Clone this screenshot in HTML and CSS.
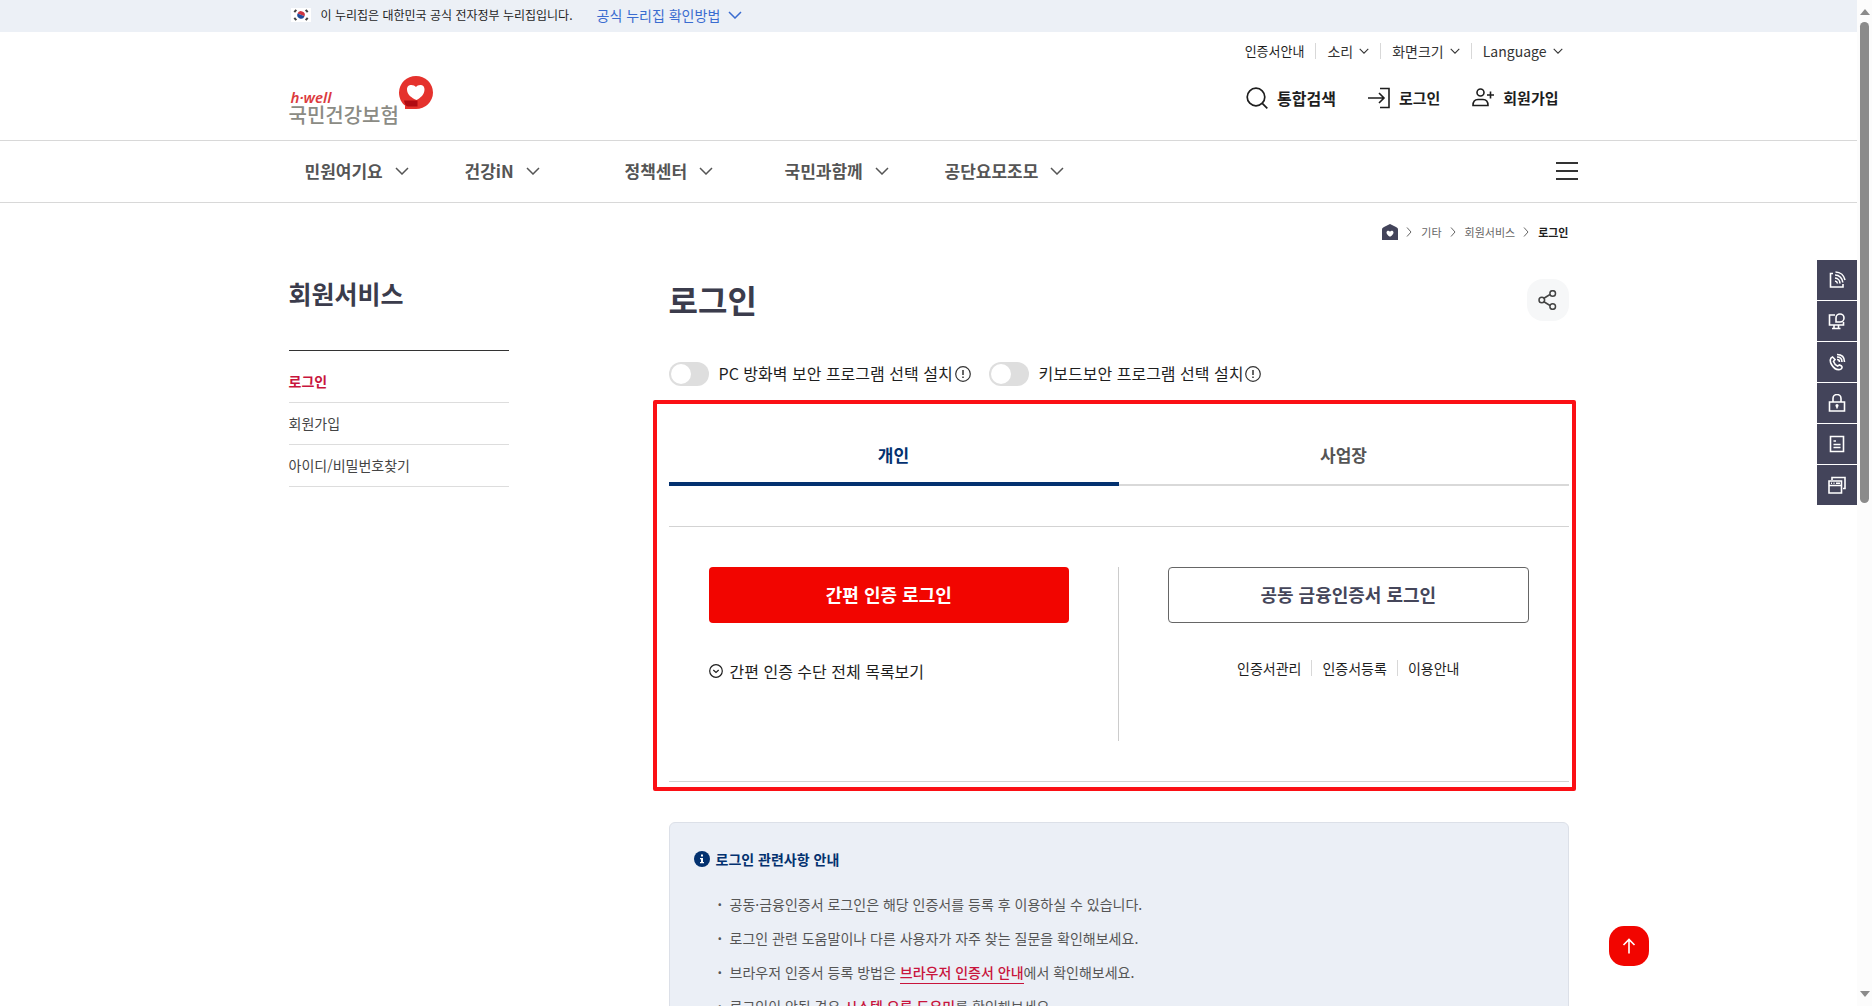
FILE: index.html
```html
<!DOCTYPE html>
<html lang="ko">
<head>
<meta charset="utf-8">
<meta name="viewport" content="width=device-width, initial-scale=1">
<title>로그인 | 국민건강보험</title>
<link rel="stylesheet" href="styles.css">
</head>
<body>
<svg class="sprite" aria-hidden="true">
  <symbol id="chevron" viewBox="0 0 14 8"><path d="M1 1l6 6 6-6" fill="none" stroke="currentColor" stroke-width="1.5"/></symbol>
  <symbol id="chevron-right" viewBox="0 0 6 10"><path d="M1 0.5l4 4.500-4 4.500" fill="none" stroke="currentColor"/></symbol>
  <symbol id="alert" viewBox="0 0 16 16"><circle cx="8" cy="8" r="7.300" fill="none" stroke="currentColor" stroke-width="1.200"/><path d="M8 4v5M8 10.500v1.500" stroke="currentColor" stroke-width="1.500"/></symbol>
</svg>
<div class="window">
  <div class="page">
    <div class="gov">
      <div class="wrap gov-row">
        <svg class="flag" viewBox="0 0 20 14" aria-hidden="true">
          <rect width="20" height="14" fill="#fff"/>
          <path d="M6.500 5.600a3.700 3.700 0 0 1 7 2.600z" fill="#cd3440"/><path d="M6.500 5.600a3.700 3.700 0 0 0 7 2.600z" fill="#1f4c9c"/>
          <path d="M3.300 4.200l2-2.400M14.700 1.800l2 2.400M3.300 9.800l2 2.400M14.700 12.200l2-2.400" stroke="#444" stroke-width="2"/>
        </svg>
        <span class="gov-text">이 누리집은 대한민국 공식 전자정부 누리집입니다.</span>
        <button class="gov-more" type="button">공식 누리집 확인방법 <svg class="chev"><use href="#chevron"/></svg></button>
      </div>
    </div>

    <header class="wrap header">
      <a class="logo" href="#">
        <span class="logo-words"><em>h·well</em><strong>국민건강보험</strong></span>
        <svg class="logo-mark" viewBox="0 0 34 34" aria-hidden="true">
          <path d="M17 0a17 16.500 0 0 1 0 33H6v-3.500C2.500 27 0 22 0 16.500A17 16.500 0 0 1 17 0z" fill="#e5322d"/>
          <path d="M17 11c1.500-2.500 8.500-3.500 8.500 2.500 0 5-4 8.500-8 10.500-5-2-9.500-5.500-9.500-10.500 0-6 7-5 9-2.500z" fill="#fff"/>
          <path d="M5 24.500h13.500v6H9c-2 0-3.500-3-4-6z" fill="#b00a12"/>
        </svg>
      </a>
      <div class="tools">
        <ul class="util">
          <li><a class="small" href="#">인증서안내</a></li>
          <li><button type="button">소리 <svg class="chev-s"><use href="#chevron"/></svg></button></li>
          <li><button type="button">화면크기 <svg class="chev-s"><use href="#chevron"/></svg></button></li>
          <li><button type="button">Language <svg class="chev-s"><use href="#chevron"/></svg></button></li>
        </ul>
        <ul class="member">
          <li><a class="search" href="#"><svg viewBox="0 0 22 22"><circle cx="10" cy="10" r="8.800" fill="none" stroke="currentColor" stroke-width="1.700"/><path d="M16.300 16.300l5 5" stroke="currentColor" stroke-width="1.700"/></svg>통합검색</a></li>
          <li><a href="#"><svg viewBox="0 0 22 22"><path d="M0 11h15.500M11 6l5 5-5 5M12 1.500h9v19h-9" fill="none" stroke="currentColor" stroke-width="1.600"/></svg>로그인</a></li>
          <li><a href="#"><svg viewBox="0 0 22 22"><circle cx="8.500" cy="5.500" r="3.500" fill="none" stroke="currentColor" stroke-width="1.600"/><path d="M1 18.500c0-4 2-6 5-6h5c3 0 5 2 5 6zM15 8h7M18.500 4.500v7" fill="none" stroke="currentColor" stroke-width="1.600"/></svg>회원가입</a></li>
        </ul>
      </div>
    </header>

    <nav class="gnb" aria-label="주메뉴">
      <div class="gnb-row">
        <ul>
          <li><a href="#">민원여기요 <svg class="chev"><use href="#chevron"/></svg></a></li>
          <li><a href="#">건강iN <svg class="chev"><use href="#chevron"/></svg></a></li>
          <li><a href="#">정책센터 <svg class="chev"><use href="#chevron"/></svg></a></li>
          <li><a href="#">국민과함께 <svg class="chev"><use href="#chevron"/></svg></a></li>
          <li><a href="#">공단요모조모 <svg class="chev"><use href="#chevron"/></svg></a></li>
        </ul>
        <button class="menu" type="button" aria-label="전체메뉴"><span></span><span></span><span></span></button>
      </div>
    </nav>

    <div class="wrap">
      <ol class="crumbs">
        <li><a href="#" aria-label="홈"><svg class="home" viewBox="0 0 16 16"><path d="M0 5.500C0 4 1 3.500 2 3l6-3 6 3c1 .5 2 1 2 2.500V16H0z" fill="#43445a"/><path d="M8 12.800C5.500 11 4.500 9.800 4.500 8.400 4.500 6.500 7 6 8 7.700c1-1.700 3.500-1.200 3.500.7 0 1.400-1 2.600-3.500 4.400z" fill="#fff"/></svg></a></li>
        <li><svg class="sep"><use href="#chevron-right"/></svg><a href="#">기타</a></li>
        <li><svg class="sep"><use href="#chevron-right"/></svg><a href="#">회원서비스</a></li>
        <li><svg class="sep"><use href="#chevron-right"/></svg><b>로그인</b></li>
      </ol>
    </div>

    <div class="wrap columns">
      <aside class="lnb">
        <h2>회원서비스</h2>
        <ul>
          <li><a class="on" href="#">로그인</a></li>
          <li><a href="#">회원가입</a></li>
          <li><a href="#">아이디/비밀번호찾기</a></li>
        </ul>
      </aside>

      <main>
        <div class="title-row">
          <h1>로그인</h1>
          <button class="share" type="button" aria-label="공유"><svg viewBox="0 0 20 20"><path d="M5.500 8.500l6.500-4M5.500 11.500l6.500 4" stroke="#444" stroke-width="1.500"/><g fill="none" stroke="#444" stroke-width="1.500"><circle cx="3.800" cy="10" r="2.800"/><circle cx="14.700" cy="3.500" r="2.800"/><circle cx="14.700" cy="16.500" r="2.800"/></g></svg></button>
        </div>

        <div class="options">
          <label><input type="checkbox"><span>PC 방화벽 보안 프로그램 선택 설치</span><svg class="alert"><use href="#alert"/></svg></label>
          <label><input type="checkbox"><span>키보드보안 프로그램 선택 설치</span><svg class="alert"><use href="#alert"/></svg></label>
        </div>

        <section class="focus">
          <div class="tabs" role="tablist">
            <button type="button" role="tab" aria-selected="true">개인</button>
            <button type="button" role="tab" aria-selected="false">사업장</button>
          </div>
          <div class="login">
            <div class="method">
              <button class="btn primary" type="button">간편 인증 로그인</button>
              <button class="expand" type="button"><svg viewBox="0 0 14 14"><circle cx="7" cy="7" r="6.300" fill="none" stroke="currentColor" stroke-width="1.200"/><path d="M4.300 6l2.700 2.500L9.700 6" fill="none" stroke="currentColor" stroke-width="1.200"/></svg>간편 인증 수단 전체 목록보기</button>
            </div>
            <div class="divider"></div>
            <div class="method">
              <button class="btn outline" type="button">공동 금융인증서 로그인</button>
              <ul class="cert">
                <li><a href="#">인증서관리</a></li>
                <li><a href="#">인증서등록</a></li>
                <li><a href="#">이용안내</a></li>
              </ul>
            </div>
          </div>
        </section>

        <section class="notice">
          <h3><svg viewBox="0 0 16 16"><circle cx="8" cy="8" r="8" fill="currentColor"/><path d="M7 3.500h2v2H7zM6 7h3v4h1v1.300H6V11h1V8.300H6z" fill="#fff"/></svg>로그인 관련사항 안내</h3>
          <ul>
            <li>공동·금융인증서 로그인은 해당 인증서를 등록 후 이용하실 수 있습니다.</li>
            <li>로그인 관련 도움말이나 다른 사용자가 자주 찾는 질문을 확인해보세요.</li>
            <li>브라우저 인증서 등록 방법은 <a href="#">브라우저 인증서 안내</a>에서 확인해보세요.</li>
            <li>로그인이 안될 경우 <a href="#">시스템 오류 도우미</a>를 확인해보세요.</li>
          </ul>
        </section>
      </main>
    </div>

    <div class="quick">
      <a href="#" aria-label="모바일"><svg viewBox="0 0 18 18"><path d="M5 2.500H2.500V16H15v-3"/><path d="M7 7a5.500 5.500 0 0 1 5 5.500M7 10a3 3 0 0 1 2.500 2.500M7 4c4.500 0 7.500 3.500 7.800 7.500M7.500 1c5 0 8.500 3.500 9.500 8"/></svg></a>
      <a href="#" aria-label="원격상담"><svg viewBox="0 0 18 18"><path d="M7 3H1.500v10h14v-3M6 13v3.500M10.500 13v3.500M4 16.500h8.500M8 10V6a4 4 0 1 1 4 4z"/></svg></a>
      <a href="#" aria-label="전화상담"><svg viewBox="0 0 18 18"><path d="M4.500 4C2 5 1.500 8 3.500 11.500S9 17 12 16.500c2-.5 2.500-2.500 1.500-3.500l-2-1-2 1C7.500 12 6 10 5.500 8.500l1.500-2zM9 6.500c1.700 0 2.500 1 2.500 2.500M9 4c3.500 0 5 2 5 5M9 1.500c5 0 7.500 3 7.500 7.500"/></svg></a>
      <a href="#" aria-label="인증센터"><svg viewBox="0 0 18 18"><path d="M1.500 8h15v9h-15zM5 8V4.500a4 4 0 0 1 8 0V8M9 12v2.500"/><circle cx="9" cy="11.500" r=".8"/></svg></a>
      <a href="#" aria-label="서식자료실"><svg viewBox="0 0 18 18"><path d="M2.500 1.500h13v15h-13zM5.500 6H8M5.500 9.500h7M5.500 12.500h7"/></svg></a>
      <a href="#" aria-label="관련사이트"><svg viewBox="0 0 18 18"><path d="M1 5h12.500v12H1zM1 9.500h12.500M4 4V1.500h13v11h-2M3 7.300h1M5.500 7.300h1M8 7.300h4"/></svg></a>
    </div>
    <a class="to-top" href="#" aria-label="맨 위로"><svg viewBox="0 0 14 16"><path d="M7 15.500V1.500M1.500 7L7 1.500 12.500 7" fill="none" stroke="#fff" stroke-width="1.600"/></svg></a>
  </div>

  <div class="scrollbar" aria-hidden="true">
    <svg viewBox="0 0 10 6"><path d="M0 6l5-6 5 6z" fill="#8b8b8b"/></svg>
    <div class="track"><div class="thumb"></div></div>
    <svg viewBox="0 0 10 6"><path d="M0 0l5 6 5-6z" fill="#8b8b8b"/></svg>
  </div>
</div>
</body>
</html>
```

FILE: styles.css
```css
* { box-sizing: border-box; }
body {
  margin: 0;
  font-family: "Noto Sans CJK KR", "Noto Sans", sans-serif;
  font-size: 14px;
  line-height: 20px;
  color: #1e1e1e;
  background: #fff;
}
ul, ol { list-style: none; margin: 0; padding: 0; }
h1, h2, h3 { margin: 0; color: #3b3c4c; }
a { color: inherit; text-decoration: none; }
button { border: 0; padding: 0; background: none; font: inherit; color: inherit; cursor: pointer; }
svg { display: block; flex: none; }
.sprite { position: absolute; width: 0; height: 0; }

.window { display: grid; grid-template-columns: minmax(0, 1fr) 15px; height: 100vh; }
.page { overflow-y: auto; scrollbar-width: none; }
.wrap { max-width: 1280px; margin: 0 auto; }
.chev { width: 14px; height: 8px; }
.chev-s { width: 10px; height: 6px; }

/* government banner */
.gov { background: #ecf0f6; }
.gov-row { display: flex; align-items: center; height: 32px; padding: 0 0 2px 2px; }
.flag { width: 20px; height: 14px; margin-right: 10px; }
.gov-text { font-size: 12px; margin-right: 24px; }
.gov-more { display: flex; align-items: center; gap: 8px; color: #3a6cd0; }

/* header */
.header { display: flex; justify-content: space-between; height: 108px; }
.logo { display: flex; align-items: flex-start; padding-top: 44px; }
.logo-words { display: flex; flex-direction: column; padding-top: 13px; }
.logo-words em { font: italic 600 15px/16px "Noto Sans", sans-serif; color: #dc3a3e; padding-left: 2px; }
.logo-words strong { font-size: 20px; line-height: 20px; font-weight: 500; color: #8b8b84; }
.logo-mark { width: 34px; height: 34px; }
.tools { display: flex; flex-direction: column; align-items: flex-end; padding-top: 9px; gap: 24px; }
.util { display: flex; align-items: center; padding-right: 6px; }
.util li { display: flex; align-items: center; }
.util li + li::before { content: ""; width: 1px; height: 16px; margin: 0 11px; background: #d8d8d8; }
.util button { display: flex; align-items: center; gap: 6px; color: #333; }
.util .small { font-size: 13px; }
.member { display: flex; gap: 32px; padding-right: 10px; }
.member a { display: flex; align-items: center; gap: 9px; height: 26px; font-size: 15px; font-weight: 700; }
.member .search { font-size: 16px; }
.member svg { width: 22px; height: 22px; }

/* main navigation */
.gnb { border-top: 1px solid #d8d8d8; border-bottom: 1px solid #d8d8d8; }
.gnb-row { display: flex; justify-content: space-between; align-items: center; max-width: 1298px; height: 61px; margin: 0 auto; padding: 0 0 2px 25px; }
.gnb ul { display: grid; grid-template-columns: repeat(5, 160px); }
.gnb a { display: flex; align-items: center; gap: 12px; font-size: 17px; font-weight: 700; color: #555; }
.menu { display: flex; flex-direction: column; gap: 6px; width: 22px; }
.menu span { height: 2px; background: #333; }

/* breadcrumbs */
.crumbs { display: flex; justify-content: flex-end; align-items: center; height: 58px; font-size: 11px; color: #666; }
.crumbs li { display: flex; align-items: center; }
.crumbs b { color: #1e1e1e; }
.home { width: 16px; height: 16px; }
.sep { width: 6px; height: 10px; margin: 0 9px 0 8px; }

/* page columns */
.columns { display: grid; grid-template-columns: 220px minmax(0, 900px); justify-content: space-between; }
.lnb h2 { font-size: 25px; line-height: 36px; padding: 14px 0 39px; border-bottom: 1px solid #333; }
.lnb ul { padding-top: 10px; }
.lnb li { border-bottom: 1px solid #ddd; }
.lnb a { display: block; line-height: 41px; color: #444; }
.lnb .on { font-weight: 700; color: #c8143c; }

.title-row { display: flex; justify-content: space-between; align-items: center; height: 78px; }
.title-row h1 { font-size: 32px; line-height: 48px; padding-bottom: 2px; }
.share { display: grid; place-items: center; width: 42px; height: 42px; border-radius: 16px; background: #f6f7f8; }
.share svg { width: 20px; height: 20px; }

.options { display: flex; gap: 18px; height: 69px; align-items: center; }
.options label { display: flex; align-items: center; font-size: 16px; }
.options span { padding: 0 2px 2px 10px; }
.options input { appearance: none; width: 40px; height: 24px; margin: 0; padding: 2px; border-radius: 12px; background: #dedede; }
.options input::before { content: ""; display: block; width: 20px; height: 20px; border-radius: 50%; background: #fff; }
.alert { width: 16px; height: 16px; color: #333; }

/* highlighted login area */
.focus { margin: -8px -7px 0 -16px; padding: 32px 3px 5px 12px; border: 4px solid #fb1015; border-radius: 2px; }
.tabs { display: grid; grid-template-columns: 1fr 1fr; }
.tabs button { height: 50px; padding-bottom: 10px; border-bottom: 2px solid #d9d9d9; font-size: 17px; font-weight: 700; color: #555; }
.tabs [aria-selected="true"] { padding-bottom: 8px; border-bottom: 4px solid #03316f; color: #03316f; }
.login { display: grid; grid-template-columns: 1fr 1px 1fr; gap: 49px; margin-top: 40px; padding: 40px; border-top: 1px solid #d3d3d3; border-bottom: 1px solid #d3d3d3; }
.divider { height: 174px; background: #ccc; }
.btn { width: 100%; height: 56px; padding-bottom: 2px; border-radius: 4px; font-size: 18px; font-weight: 700; }
.primary { background: #f20500; color: #fff; }
.outline { border: 1px solid #666; color: #45465a; }
.expand { display: flex; align-items: center; gap: 7px; margin-top: 38px; font-size: 16px; }
.expand svg { width: 14px; height: 14px; }
.cert { display: flex; justify-content: center; margin-top: 35px; }
.cert li { display: flex; align-items: center; }
.cert li + li::before { content: ""; width: 1px; height: 16px; margin: 0 10px; background: #d8d8d8; }

/* notice */
.notice { margin-top: 31px; padding: 23px 24px; border: 1px solid #dce0e8; border-radius: 6px; background: #ebeff6; color: #555; }
.notice h3 { display: flex; align-items: center; gap: 6px; height: 26px; font-size: 14px; color: #03316f; }
.notice h3 svg { width: 16px; height: 16px; }
.notice ul { padding: 15px 0 0 24px; }
.notice li { display: flex; line-height: 34px; white-space: pre; }
.notice li::before { content: "·"; width: 12px; font-weight: 700; }
.notice a { align-self: center; line-height: 22px; border-bottom: 1px solid #c8143c; font-weight: 500; color: #c8143c; }

/* floating tools */
.quick { position: fixed; top: 260px; right: 15px; display: grid; gap: 1px; }
.quick a { display: grid; place-items: center; width: 40px; height: 40px; background: #43445a; }
.quick svg { width: 18px; height: 18px; fill: none; stroke: #fff; stroke-width: 1.6; }
.to-top { position: fixed; right: 223px; bottom: 40px; display: grid; place-items: center; width: 40px; height: 40px; border-radius: 15px; background: #f20500; }
.to-top svg { width: 14px; height: 16px; }

/* scrollbar */
.scrollbar { display: flex; flex-direction: column; align-items: center; padding: 9px 0; gap: 7px; background: #fcfcfc; }
.scrollbar svg { width: 10px; height: 6px; }
.track { flex: 1; width: 9px; }
.thumb { height: 50%; border-radius: 5px; background: #8b8b8b; }
```
